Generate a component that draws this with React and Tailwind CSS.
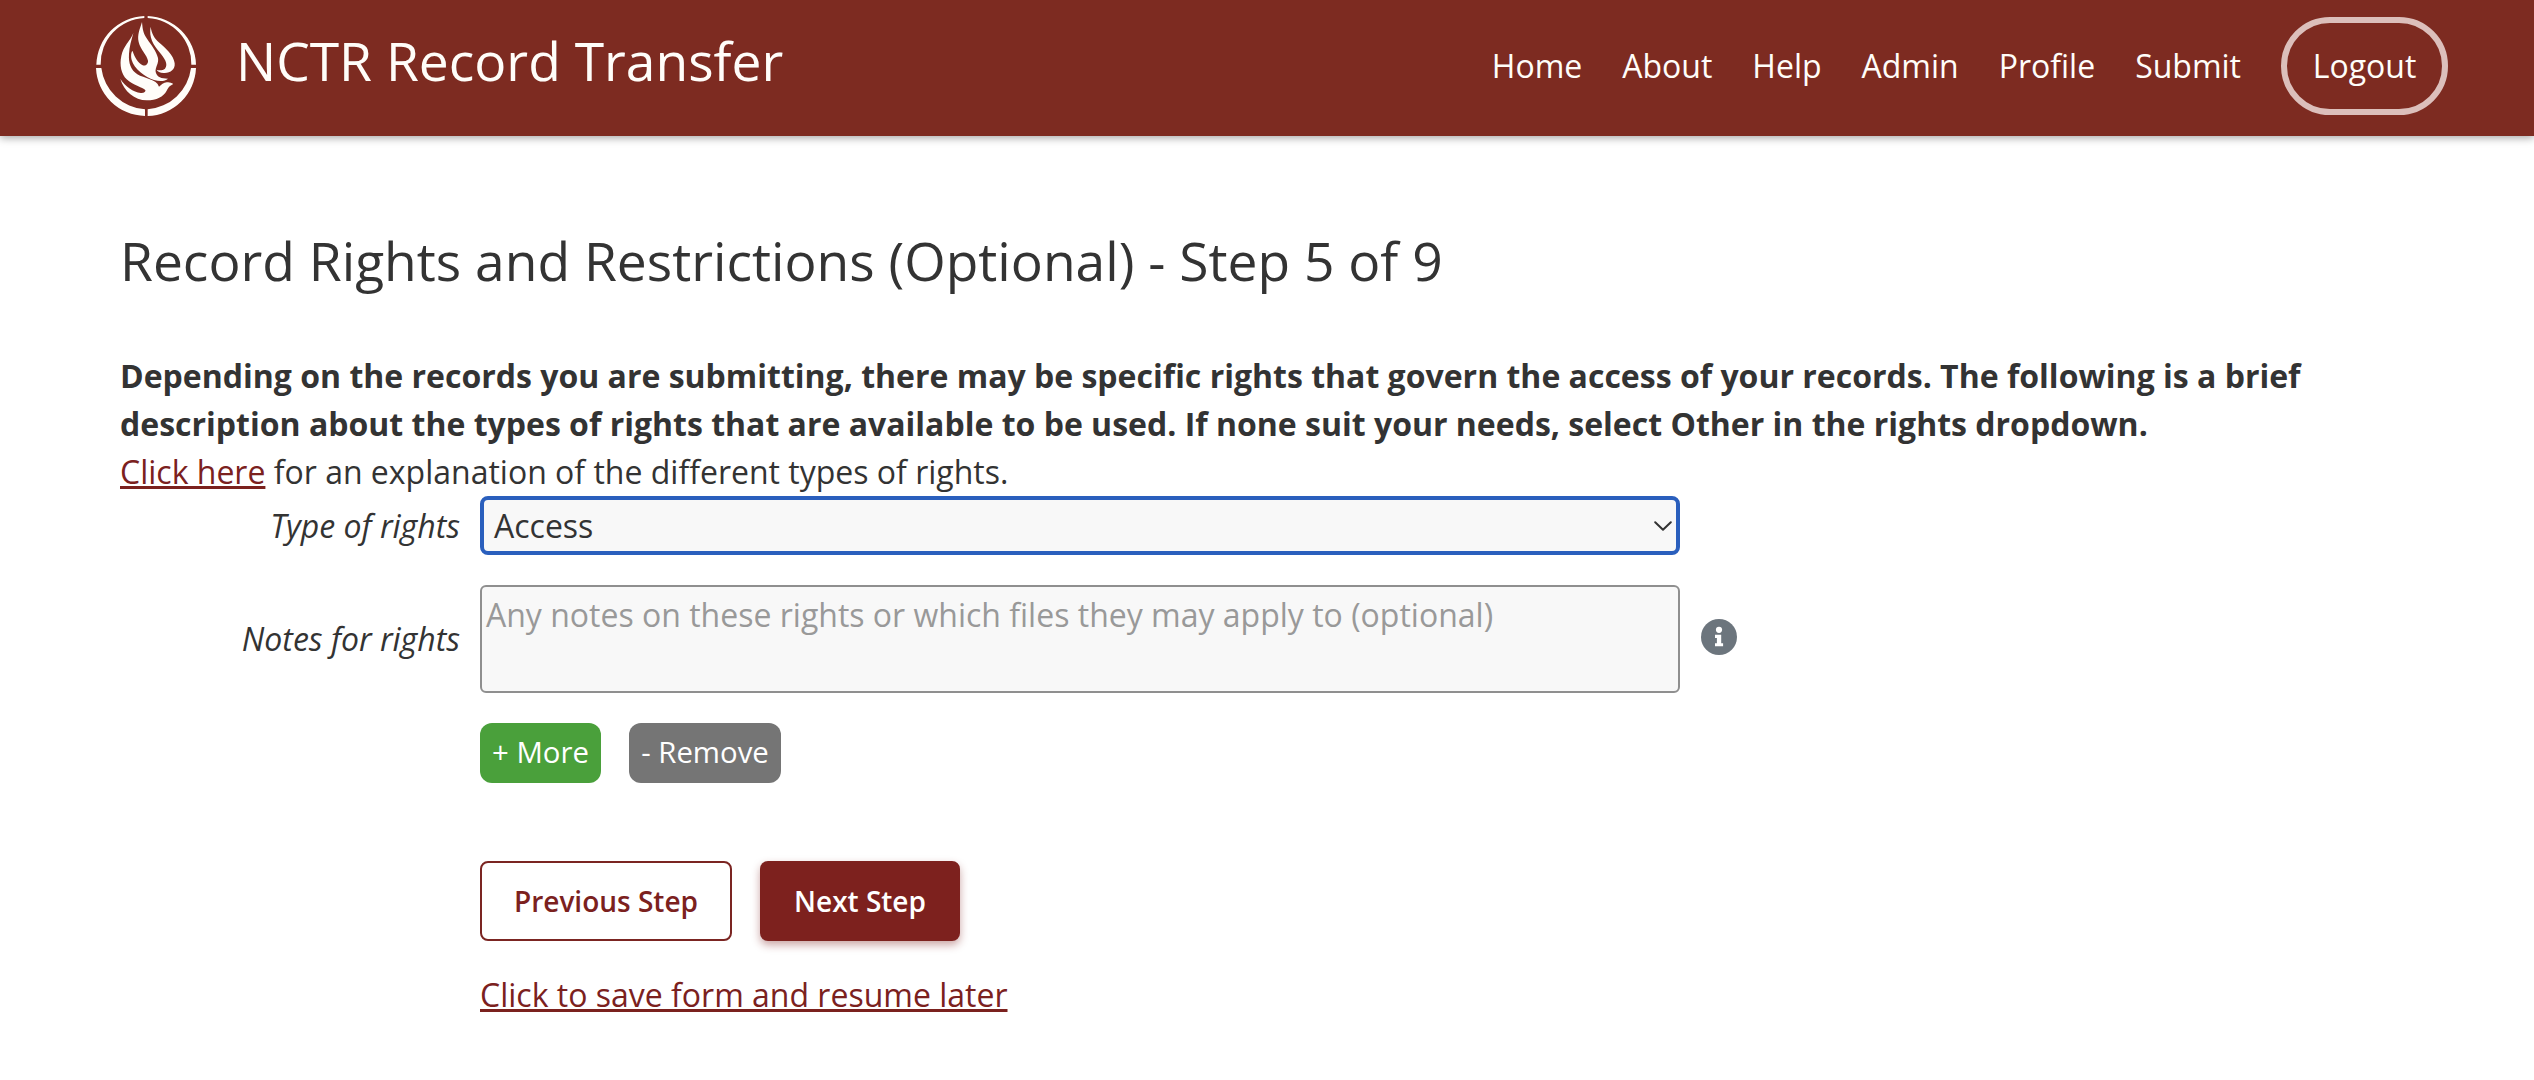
import React from "react";

const navItems = ["Home", "About", "Help", "Admin", "Profile", "Submit"];

function Logo() {
  return (
    <svg viewBox="0 0 390 435" className="h-[145px] w-[130px]" fill="#fffdf9">
      <path d="M193 48A150 150 0 0 0 49 194H62A137 137 0 0 1 193 54Z" />
      <path d="M203 48A150 150 0 0 1 348 194H334A137 137 0 0 0 203 54Z" />
      <path d="M48 204A150 150 0 0 0 195 348V328A142 142 0 0 1 64 204Z" />
      <path d="M203 348A150 150 0 0 0 348 204H333A142 142 0 0 1 203 328Z" />
      <path d="M186 66C188 90 190 100 201 116C214 136 229 152 234 174C237 190 225 203 227 216C231 232 244 236 264 236C255 244 240 245 222 240C196 232 162 206 155 180C150 160 158 150 158 154C164 172 174 190 188 196C198 199 205 190 204 182C201 166 182 150 176 126C171 104 180 86 186 66Z" />
      <path d="M212 80C215 100 222 114 238 128C256 144 282 166 284 190C286 208 272 219 254 219C242 220 232 215 230 209C236 212 248 212 255 206C266 192 253 174 238 156C220 134 206 112 212 80Z" />
      <path d="M160 99C154 122 148 140 147 162C145 190 153 210 172 223C192 235 230 238 237 260C244 254 252 246 262 247C268 246 274 249 280 252C268 258 266 262 260 272C250 290 230 301 200 301C164 301 132 274 121 237C136 260 160 276 182 279C192 280 198 275 196 270C188 262 158 256 140 238C124 222 118 196 124 168C130 138 150 124 160 99Z" />
    </svg>
  );
}

function InfoIcon() {
  return (
    <svg viewBox="0 0 36 36" className="h-9 w-9">
      <circle cx="18" cy="18" r="18" fill="#6c757d" />
      <circle cx="18" cy="10.8" r="3.1" fill="#fff" />
      <path d="M14 15.8h6.2v8.4h1.9v3.1H14v-3.1h1.9v-5.3H14Z" fill="#fff" />
    </svg>
  );
}

export default function App() {
  return (
    <div className="min-h-[1080px] w-full bg-white font-['Open_Sans',sans-serif] text-[32px] leading-[48px] text-[#333]">
      <header className="flex h-[136px] items-start bg-[#7d2b21] pl-20 pr-[86px] text-[#fffdf9] shadow-[0_2px_8px_rgba(0,0,0,0.35)]">
        <Logo />
        <div className="ml-[26px] mt-6 whitespace-nowrap text-[53.33px] leading-[74px]">NCTR Record Transfer</div>
        <nav className="ml-auto mt-[17px] flex items-center gap-10">
          {navItems.map((item) => (
            <a key={item}>{item}</a>
          ))}
          <a className="flex h-[98px] w-[167px] items-center justify-center rounded-[49px] border-[6px] border-[#dcbfbb]">Logout</a>
        </nav>
      </header>

      <main className="px-[120px] pt-[86px]">
        <h1 className="text-[53.33px] leading-[78px]">Record Rights and Restrictions (Optional) - Step 5 of 9</h1>
        <p className="mt-[52px] whitespace-nowrap font-bold">
          Depending on the records you are submitting, there may be specific rights that govern the access of your records. The following is a brief
          <br />
          description about the types of rights that are available to be used. If none suit your needs, select Other in the rights dropdown.
        </p>
        <p>
          <a className="text-[#7b211e] underline decoration-[3px] underline-offset-2">Click here</a> for an explanation of the different types of rights.
        </p>

        <div className="grid grid-cols-[340px_1200px_36px] items-center gap-x-5">
          <label className="text-right italic">Type of rights</label>
          <div className="flex h-[59px] items-center justify-between rounded-lg border-4 border-[#2a5fbd] bg-[#f8f8f8] pl-[10px] pr-[4px]">
            <span>Access</span>
            <svg viewBox="0 0 18 10" className="h-[10px] w-[18px]" fill="none" stroke="#333" strokeWidth="2" strokeLinecap="round" strokeLinejoin="round">
              <path d="M1.2 1.2L9 8.8L16.8 1.2" />
            </svg>
          </div>
          <span />

          <label className="mt-[30px] text-right italic">Notes for rights</label>
          <div className="mt-[30px] h-[108px] rounded-md border-2 border-[#8f8f8f] bg-[#f8f8f8] px-1 pt-1 text-[#999]">
            Any notes on these rights or which files they may apply to (optional)
          </div>
          <div className="ml-px mt-[26px]">
            <InfoIcon />
          </div>
        </div>

        <div className="ml-[360px] mt-[30px] flex gap-7 text-[29.33px] text-white">
          <button className="h-[60px] w-[121px] rounded-xl bg-[#4aa03b] pb-0.5">+ More</button>
          <button className="h-[60px] w-[152px] rounded-xl bg-[#757575] pb-0.5">- Remove</button>
        </div>

        <div className="ml-[360px] mt-[78px] flex gap-7 text-[28px] font-semibold">
          <button className="h-20 w-[252px] rounded-lg border-2 border-[#7b2522] text-[#7b211e]">Previous Step</button>
          <button className="h-20 w-[200px] rounded-lg bg-[#7d211e] text-white shadow-[0_4px_8px_rgba(125,33,30,0.4)]">Next Step</button>
        </div>

        <a className="ml-[360px] mt-[30px] block w-fit text-[#7b211e] underline decoration-[3px] underline-offset-2">
          Click to save form and resume later
        </a>
      </main>
    </div>
  );
}
